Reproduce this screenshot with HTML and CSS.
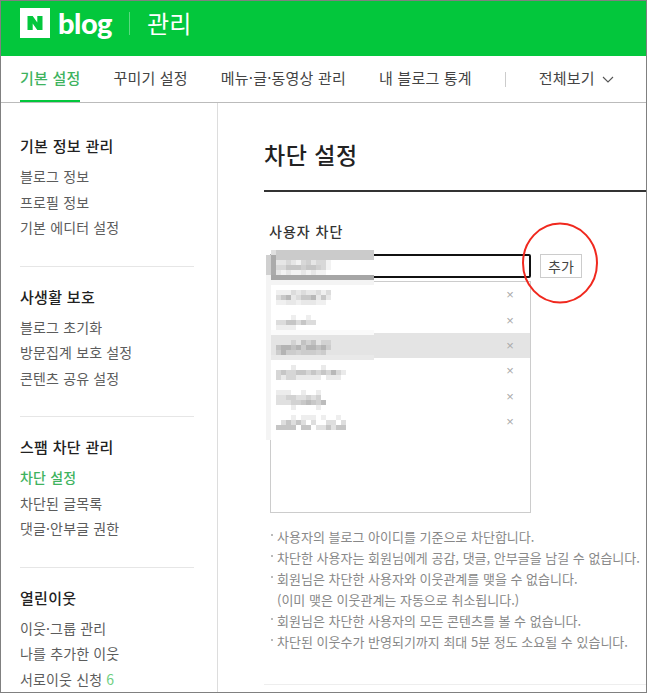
FILE: index.html
```html
<!DOCTYPE html>
<html lang="ko">
<head>
<meta charset="utf-8">
<title>차단 설정</title>
<link rel="stylesheet" href="styles.css">
</head>
<body>
<div class="frame">
  <header class="top">
    <span class="logo-n"><svg width="16" height="14" viewBox="0 0 16 14"><path fill="#03c73c" d="M0.500 0h5.200l4.600 6.600V0h5.200v14h-5.200L5.700 7.400V14H0.500z"/></svg></span>
    <span class="logo-blog">blog</span>
    <span class="top-sep"></span>
    <span class="top-title">관리</span>
  </header>
  <nav class="tabs">
    <a class="tab tab-on">기본 설정</a>
    <a class="tab">꾸미기 설정</a>
    <a class="tab">메뉴·글·동영상 관리</a>
    <a class="tab">내 블로그 통계</a>
    <span class="tab-sep"></span>
    <a class="tab tab-all">전체보기 <svg class="chev" width="12" height="7" viewBox="0 0 12 7"><path d="M1 1l5 5 5-5" fill="none" stroke="#555" stroke-width="1.100"/></svg></a>
  </nav>
  <div class="body">
    <aside class="side">
      <section class="group">
        <h3>기본 정보 관리</h3>
        <a>블로그 정보</a><a>프로필 정보</a><a>기본 에디터 설정</a>
      </section>
      <section class="group">
        <h3>사생활 보호</h3>
        <a>블로그 초기화</a><a>방문집계 보호 설정</a><a>콘텐츠 공유 설정</a>
      </section>
      <section class="group">
        <h3>스팸 차단 관리</h3>
        <a class="on">차단 설정</a><a>차단된 글목록</a><a>댓글·안부글 권한</a>
      </section>
      <section class="group last">
        <h3>열린이웃</h3>
        <a>이웃·그룹 관리</a><a>나를 추가한 이웃</a><a>서로이웃 신청 <em>6</em></a>
      </section>
    </aside>
    <main class="main">
      <h2>차단 설정</h2>
      <div class="block">
        <h4>사용자 차단</h4>
        <div class="add-row">
          <div class="input"></div>
          <button class="add">추가</button>
        </div>
        <div class="list-wrap">
          <ul class="list">
            <li><i>×</i></li>
            <li><i>×</i></li>
            <li class="hl"><i>×</i></li>
            <li><i>×</i></li>
            <li><i>×</i></li>
            <li><i>×</i></li>
          </ul>
          <svg class="patch" width="108" height="190" viewBox="0 0 108 190" shape-rendering="crispEdges" fill="none" stroke-width="5">
            <path stroke="#f4f4f4" d="M2.500 25V190M5 32.500H108"/>
            <path stroke="#d0d0d0" d="M2.500 5V25"/>
            <path stroke="#e0e0e0" d="M5 2.500H10"/>
            <path stroke="#ababab" d="M7.500 5V25"/>
            <path stroke="#cbcbcb" stroke-width="10" d="M10 5H108"/>
            <path stroke="#a6a6a6" d="M5 27.500H108"/>
            <path stroke="#fafafa" d="M5 82.500H108"/>
            <path stroke="#e9e9e9" d="M5 107H108"/>
            <!-- head -->
            <path stroke="#e6e6e6" d="M10 12.500h10M25 12.500h5M45 12.500h5M10 22.500h5M20 22.500h5M35 22.500h5M45 22.500h5"/>
            <path stroke="#d8d8d8" d="M20 12.500h5M35 12.500h5M50 12.500h10M10 17.500h10M55 17.500h5"/>
            <path stroke="#c6c6c6" d="M20 17.500h15M40 17.500h10"/>
            <path stroke="#d0d0d0" d="M40 12.500h5M35 17.500h5M50 17.500h5"/>
            <path stroke="#f2f2f2" d="M30 12.500h5M60 12.500h5M60 17.500h5M15 22.500h5M25 22.500h10M40 22.500h5M50 22.500h10"/>
            <!-- row 1 -->
            <path stroke="#f0f0f0" d="M10 42.500h15M55 42.500h5M10 52.500h10M30 52.500h5M50 52.500h10"/>
            <path stroke="#dcdcdc" d="M25 42.500h5M35 42.500h5M50 42.500h5M60 42.500h5M10 47.500h5M30 47.500h5"/>
            <path stroke="#c8c8c8" d="M15 47.500h5M35 47.500h10M55 47.500h5"/>
            <path stroke="#b8b8b8" d="M20 47.500h5M45 47.500h5"/>
            <path stroke="#e8e8e8" d="M30 42.500h5M40 42.500h10M25 47.500h5M50 47.500h5M60 47.500h5M20 52.500h10M35 52.500h15"/>
            <!-- row 2 -->
            <path stroke="#eeeeee" d="M25 67.500h5M40 67.500h5M10 77.500h20"/>
            <path stroke="#dcdcdc" d="M10 72.500h10M30 72.500h5M40 72.500h10"/>
            <path stroke="#c6c6c6" d="M20 72.500h10M35 72.500h5"/>
            <!-- row 3 -->
            <path stroke="#d2d2d2" d="M25 92.500h5M40 92.500h5M55 92.500h10M30 102.500h5M50 102.500h5"/>
            <path stroke="#c2c2c2" d="M35 92.500h5M45 92.500h5M10 97.500h5M25 97.500h5M50 97.500h5"/>
            <path stroke="#b4b4b4" d="M15 97.500h10M30 97.500h5M40 97.500h10M55 97.500h5M15 102.500h5"/>
            <path stroke="#cccccc" d="M35 97.500h5M60 97.500h5M10 102.500h5M20 102.500h10M35 102.500h15M55 102.500h5"/>
            <!-- row 4 -->
            <path stroke="#eaeaea" d="M25 117.500h5M55 117.500h5M75 122.500h5M15 127.500h5M30 127.500h25M60 127.500h15"/>
            <path stroke="#d6d6d6" d="M10 122.500h5M20 122.500h10M40 122.500h5M50 122.500h5M60 122.500h5M10 127.500h5M20 127.500h10"/>
            <path stroke="#c6c6c6" d="M15 122.500h5M30 122.500h10M45 122.500h5M55 122.500h5"/>
            <path stroke="#b8b8b8" d="M65 122.500h5"/>
            <path stroke="#d8d8d8" d="M70 122.500h5"/>
            <!-- row 5 -->
            <path stroke="#ececec" d="M10 142.500h15M35 142.500h5M50 142.500h5M25 157.500h5M50 157.500h5"/>
            <path stroke="#e0e0e0" d="M10 147.500h10M30 147.500h10M45 147.500h5M10 152.500h15"/>
            <path stroke="#d2d2d2" d="M20 147.500h10M40 147.500h5M25 152.500h10M50 147.500h5M50 152.500h5"/>
            <path stroke="#bcbcbc" d="M55 152.500h5M40 152.500h5"/>
            <path stroke="#c8c8c8" d="M35 152.500h5M45 152.500h5"/>
            <!-- row 6 -->
            <path stroke="#eeeeee" d="M25 167.500h5M35 167.500h15M55 167.500h5M70 167.500h5"/>
            <path stroke="#dedede" d="M15 172.500h5M25 172.500h5M35 172.500h5M45 172.500h5M60 172.500h10M75 172.500h5"/>
            <path stroke="#c6c6c6" d="M10 177.500h20M35 177.500h10M60 177.500h5M70 177.500h10M20 172.500h5M30 172.500h5"/>
            <path stroke="#e2e2e2" d="M50 177.500h10M65 177.500h5"/>
          </svg>
        </div>
        <ul class="notes">
          <li>사용자의 블로그 아이디를 기준으로 차단합니다.</li>
          <li>차단한 사용자는 회원님에게 공감, 댓글, 안부글을 남길 수 없습니다.</li>
          <li>회원님은 차단한 사용자와 이웃관계를 맺을 수 없습니다.<br>(이미 맺은 이웃관계는 자동으로 취소됩니다.)</li>
          <li>회원님은 차단한 사용자의 모든 콘텐츠를 볼 수 없습니다.</li>
          <li>차단된 이웃수가 반영되기까지 최대 5분 정도 소요될 수 있습니다.</li>
        </ul>
      </div>
      <div class="foot-line"></div>
    </main>
  </div>
  <svg class="circle" width="78" height="84" viewBox="0 0 78 84"><ellipse cx="39" cy="42" rx="37" ry="39.500" fill="none" stroke="#f0281e" stroke-width="2"/></svg>
</div>
</body>
</html>
```

FILE: styles.css
```css
* { box-sizing: border-box; }
html, body { margin: 0; padding: 0; }
body {
  width: 647px;
  height: 693px;
  overflow: hidden;
  background: #fff;
  font-family: "Noto Sans CJK KR", "Noto Sans", sans-serif;
  color: #444;
}
.frame {
  position: relative;
  width: 647px;
  height: 693px;
  border: 1px solid #808080;
  overflow: hidden;
}
.top {
  height: 55px;
  background: #03c73c;
  display: flex;
  align-items: flex-start;
  padding: 7px 0 0 19px;
  color: #fff;
}
.logo-n {
  width: 30px;
  height: 30px;
  background: #fff;
  display: flex;
  align-items: center;
  justify-content: center;
}
.logo-blog {
  font-family: "Lato", sans-serif;
  font-weight: 900;
  font-size: 29px;
  line-height: 30px;
  margin-left: 8px;
  letter-spacing: -0.5px;
}
.top-sep {
  width: 1px;
  height: 23px;
  margin-top: 4px;
  background: rgba(255,255,255,.35);
  margin-left: 17px;
}
.top-title {
  font-size: 24px;
  line-height: 30px;
  margin-left: 17px;
  letter-spacing: .2px;
}
.tabs {
  height: 47px;
  border-bottom: 1px solid #bbb;
  display: flex;
  align-items: center;
  padding-left: 19px;
  font-size: 15px;
  letter-spacing: .2px;
}
.tab {
  height: 46px;
  line-height: 44px;
  margin-right: 33px;
  color: #444;
  white-space: nowrap;
}
.tab-on {
  color: #3fb35f;
  font-weight: 500;
  border-bottom: 2px solid #03c73c;
}
.tab-sep {
  width: 1px;
  height: 15px;
  background: #ccc;
  margin-right: 33px;
}
.tab-all { margin-right: 0; }
.chev { margin-left: 3px; vertical-align: 1px; }
.body {
  display: flex;
  height: 590px;
}
.side {
  width: 217px;
  flex: none;
  border-right: 1px solid #ddd;
  padding: 13px 0 0 19px;
}
.group {
  width: 174px;
  height: 150.500px;
  padding-top: 19px;
  border-bottom: 1px solid #e6e6e6;
}
.group.last { border-bottom: 0; }
.group h3 {
  margin: 0 0 7px;
  font-size: 15px;
  line-height: 22px;
  font-weight: 500;
  letter-spacing: .3px;
  color: #222;
}
.group a {
  display: block;
  font-size: 14px;
  line-height: 25.500px;
  letter-spacing: .15px;
  color: #5c5c5c;
  white-space: nowrap;
}
.group a.on { color: #3fb35f; font-weight: 500; }
.group em { font-style: normal; color: #6fcf7f; }
.main {
  flex: 1;
  padding: 0 0 0 46px;
  min-width: 0;
}
.main h2 {
  margin: 0;
  height: 89px;
  width: 400px;
  padding-top: 33px;
  font-size: 23px;
  line-height: 36px;
  font-weight: 500;
  letter-spacing: .5px;
  color: #222;
  border-bottom: 2px solid #333;
}
.block { padding: 29px 0 0 5px; }
.block h4 {
  margin: 0;
  font-size: 14px;
  line-height: 20px;
  font-weight: 500;
  color: #333;
  letter-spacing: 1px;
}
.add-row {
  display: flex;
  align-items: center;
  margin: 13px 0 0 1px;
}
.input {
  width: 261px;
  height: 24px;
  border: 2px solid #111;
  border-radius: 2px;
  flex: none;
}
.add {
  margin-left: 9px;
  width: 42px;
  height: 24px;
  background: #fff;
  border: 1px solid #ccc;
  padding: 0;
  font: inherit;
  font-size: 14px;
  color: #444;
}
.list-wrap {
  position: relative;
  width: 261px;
  height: 232px;
  margin: 3px 0 0 1px;
}
.list {
  list-style: none;
  margin: 0;
  padding: 0;
  height: 232px;
  border: 1px solid #ccc;
}
.list li {
  height: 25.400px;
  display: flex;
  align-items: center;
  justify-content: flex-end;
  padding-right: 15px;
}
.list li.hl { background: #e4e4e4; }
.list i {
  display: block;
  width: 10px;
  text-align: center;
  font-style: normal;
  font-family: "Liberation Sans", sans-serif;
  font-size: 13px;
  color: #aaa;
  line-height: 1;
}
.patch {
  position: absolute;
  left: -4px;
  top: -31px;
}
.notes {
  list-style: none;
  margin: 13px 0 0;
  padding: 0 0 0 1px;
  font-size: 13px;
  line-height: 21px;
  color: #888;
  white-space: nowrap;
}
.notes li {
  position: relative;
  padding-left: 7px;
}
.notes li::before {
  content: "";
  position: absolute;
  left: 1px;
  top: 8px;
  width: 2px;
  height: 2px;
  background: #bbb;
}
.foot-line {
  margin-top: 32px;
  height: 1px;
  width: 400px;
  background: #eee;
}
.circle {
  position: absolute;
  left: 520px;
  top: 220px;
}
```
